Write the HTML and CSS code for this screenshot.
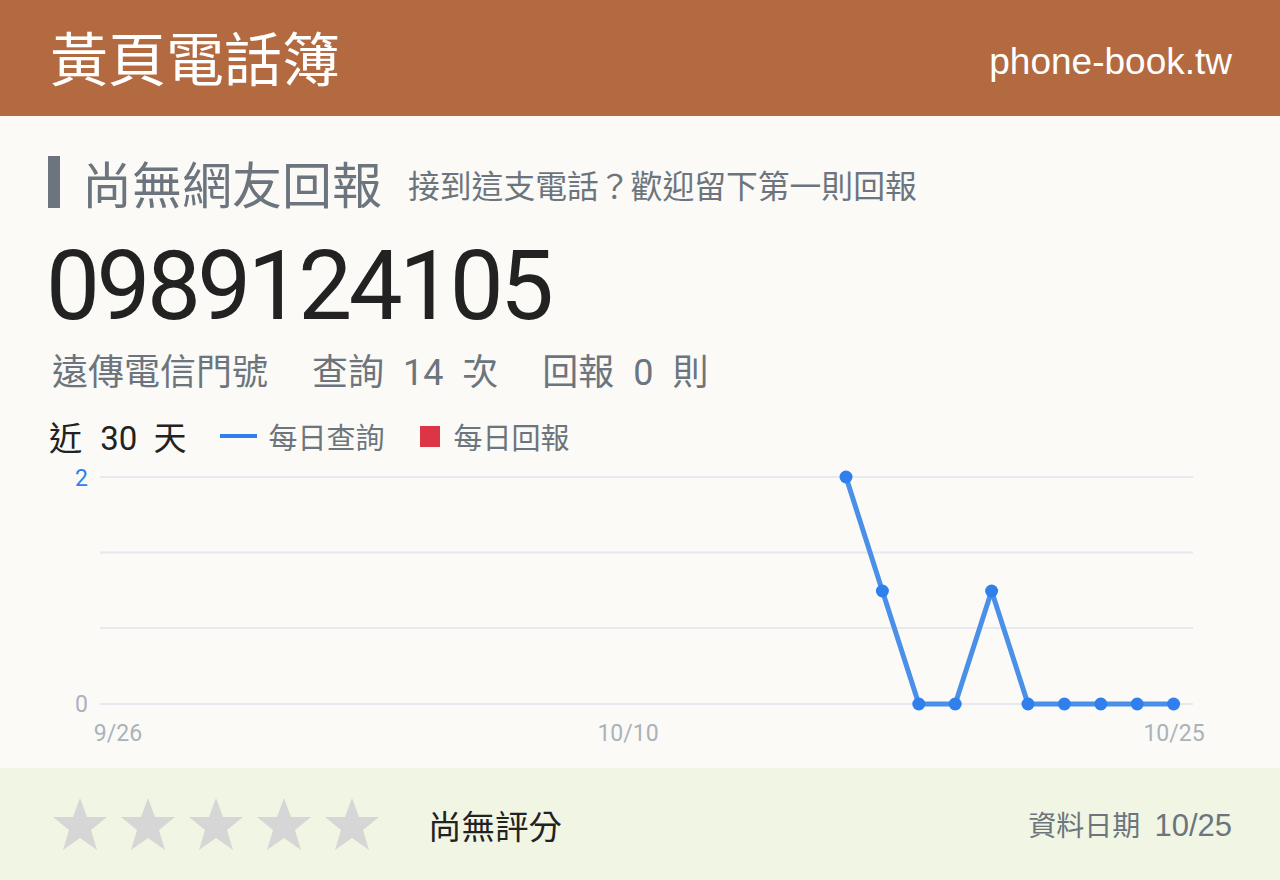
FILE: index.html
```html
<!DOCTYPE html>
<html lang="zh-Hant">
<head>
  <meta charset="UTF-8" />
  <meta name="viewport" content="width=device-width, initial-scale=1.0" />
  <title>0989124105 - 黃頁電話簿</title>
  <link rel="stylesheet" href="styles.css">
</head>
<body>
  <header class="topbar">
    <div class="brand">黃頁電話簿</div>
    <div class="domain">phone-book.tw</div>
  </header>

  <main class="card">
    <div class="heading">
      <span class="heading-mark"></span>
      <h1 class="heading-title">尚無網友回報</h1>
      <span class="heading-sub">接到這支電話？歡迎留下第一則回報</span>
    </div>

    <div class="number">0989124105</div>

    <div class="stats">
      <span>遠傳電信門號</span>
      <span>查詢 <b>14</b> 次</span>
      <span>回報 <b>0</b> 則</span>
    </div>

    <div class="legend">
      <span class="legend-range">近 <b>30</b> 天</span>
      <span class="legend-item"><i class="swatch swatch-line"></i>每日查詢</span>
      <span class="legend-item"><i class="swatch swatch-box"></i>每日回報</span>
    </div>

    <svg class="chart" width="1184" height="290" viewBox="0 0 1184 290">
      <g class="grid">
        <line x1="52" y1="16" x2="1145" y2="16" />
        <line x1="52" y1="91.5" x2="1145" y2="91.5" />
        <line x1="52" y1="167" x2="1145" y2="167" />
        <line x1="52" y1="243" x2="1145" y2="243" />
      </g>
      <text class="y-max" x="40" y="25" text-anchor="end">2</text>
      <text class="y-min" x="40" y="251" text-anchor="end">0</text>
      <text class="x-tick" x="70" y="280" text-anchor="middle">9/26</text>
      <text class="x-tick" x="580" y="280" text-anchor="middle">10/10</text>
      <text class="x-tick" x="1126" y="280" text-anchor="middle">10/25</text>
      <polyline class="series" points="798,16 834.4,130 870.8,243 907.2,243 943.6,130 980,243 1016.4,243 1052.8,243 1089.2,243 1125.6,243" />
      <g class="dots">
        <circle cx="798" cy="16" r="6.5" />
        <circle cx="834.4" cy="130" r="6.5" />
        <circle cx="870.8" cy="243" r="6.5" />
        <circle cx="907.2" cy="243" r="6.5" />
        <circle cx="943.6" cy="130" r="6.5" />
        <circle cx="980" cy="243" r="6.5" />
        <circle cx="1016.4" cy="243" r="6.5" />
        <circle cx="1052.8" cy="243" r="6.5" />
        <circle cx="1089.2" cy="243" r="6.5" />
        <circle cx="1125.6" cy="243" r="6.5" />
      </g>
    </svg>
  </main>

  <footer class="rating">
    <div class="stars">
      <svg class="star" viewBox="0 0 56 56"><polygon points="28,2 35,21 55,21 39,34 45,54 28,42 11,54 17,34 1,21 21,21" /></svg>
      <svg class="star" viewBox="0 0 56 56"><polygon points="28,2 35,21 55,21 39,34 45,54 28,42 11,54 17,34 1,21 21,21" /></svg>
      <svg class="star" viewBox="0 0 56 56"><polygon points="28,2 35,21 55,21 39,34 45,54 28,42 11,54 17,34 1,21 21,21" /></svg>
      <svg class="star" viewBox="0 0 56 56"><polygon points="28,2 35,21 55,21 39,34 45,54 28,42 11,54 17,34 1,21 21,21" /></svg>
      <svg class="star" viewBox="0 0 56 56"><polygon points="28,2 35,21 55,21 39,34 45,54 28,42 11,54 17,34 1,21 21,21" /></svg>
    </div>
    <div class="rating-text">尚無評分</div>
    <div class="updated">資料日期 <span>10/25</span></div>
  </footer>
</body>
</html>
```

FILE: styles.css
```css
* { box-sizing: border-box; margin: 0; padding: 0; }
body {
  font-family: Roboto, "Noto Sans CJK TC", sans-serif;
  background: #fbfaf6;
  color: #212529;
  width: 1280px;
  height: 880px;
  overflow: hidden;
}

.topbar {
  height: 116px;
  background: #b36a40;
  color: #fff;
  display: flex;
  align-items: center;
  justify-content: space-between;
  padding: 0 48px 0 50px;
}
.brand {
  font-family: "Noto Sans CJK TC", sans-serif;
  font-size: 58px;
  line-height: 1;
  padding-bottom: 4px;
}
.domain {
  font-family: "Liberation Sans", Arial, sans-serif;
  font-size: 37px;
  padding-top: 8px;
}

.card {
  height: 652px;
  padding: 38px 48px 0;
}

.heading {
  display: flex;
  align-items: center;
  height: 56px;
}
.heading-mark {
  width: 12px;
  height: 52px;
  background: #6c757d;
  margin-right: 22px;
}
.heading-title {
  font-family: "Noto Sans CJK TC", sans-serif;
  font-weight: 400;
  font-size: 50px;
  line-height: 1;
  color: #6c757d;
  margin-right: 26px;
}
.heading-sub {
  font-family: "Noto Sans CJK TC", sans-serif;
  font-size: 31.8px;
  color: #6c757d;
  padding-top: 4px;
}

.number {
  font-family: Roboto, sans-serif;
  font-size: 96px;
  letter-spacing: -3.5px;
  line-height: 1;
  margin-top: 28px;
  margin-left: -2px;
  color: #222;
}

.stats {
  display: flex;
  gap: 44px;
  font-size: 36px;
  color: #6c757d;
  margin-top: 16px;
  margin-left: 4px;
  line-height: 46px;
}
.stats b { font-weight: 400; margin: 0 10px; }

.legend {
  display: flex;
  align-items: center;
  margin-top: 18px;
  height: 44px;
}
.legend-range {
  font-size: 33px;
  color: #222;
  margin-right: 34px;
  margin-left: 1px;
}
.legend-range b { font-weight: 400; margin: 0 8px 0 10px; }
.legend-item {
  display: flex;
  align-items: center;
  font-size: 29px;
  color: #6c757d;
  margin-right: 36px;
}
.swatch { display: inline-block; margin-right: 11px; }
.swatch-line { width: 37px; height: 4px; background: #2f80ed; }
.swatch-box { width: 20px; height: 21px; background: #dc3545; margin-right: 13px; }

.chart {
  display: block;
  margin-top: 3px;
}
.grid line { stroke: #e6e9ed; stroke-width: 2; }
.chart text { font-family: Roboto, sans-serif; font-size: 23px; }
.y-max { fill: #2f80ed; }
.y-min { fill: #aab2bb; }
.x-tick { fill: #aab2bb; }
.series { fill: none; stroke: #4a90e8; stroke-width: 5; stroke-linejoin: round; }
.dots circle { fill: #2f80ed; }

.rating {
  height: 112px;
  background: #f1f5e3;
  display: flex;
  align-items: center;
  padding: 0 48px 0 52px;
}
.stars { display: flex; gap: 12px; }
.star { width: 56px; height: 56px; display: block; }
.star polygon { fill: #d6d6d6; }
.rating-text {
  font-family: "Noto Sans CJK TC", sans-serif;
  font-size: 33.5px;
  color: #222;
  margin-left: 48px;
}
.updated {
  margin-left: auto;
  font-family: "Noto Sans CJK TC", sans-serif;
  font-size: 28px;
  color: #6c757d;
}
.updated span {
  font-family: "Liberation Sans", Arial, sans-serif;
  font-size: 31px;
  margin-left: 8px;
}
```
